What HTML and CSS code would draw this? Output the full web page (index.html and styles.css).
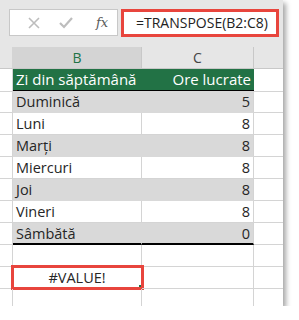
FILE: index.html
```html
<!DOCTYPE html>
<html>
<head>
<meta charset="utf-8">
<link rel="stylesheet" href="styles.css">
</head>
<body>
<div class="panel">
  <div class="fbar">
    <div class="fbox">
      <svg class="ico" width="14" height="14" viewBox="0 0 14 14"><path d="M2 2L12 12M12 2L2 12" stroke="#bdbdbd" stroke-width="1.6" fill="none"/></svg>
      <svg class="ico" width="16" height="14" viewBox="0 0 16 14"><path d="M2 7L6 11L14 2" stroke="#bdbdbd" stroke-width="2.2" fill="none"/></svg>
      <span class="fx">fx</span>
    </div>
    <div class="formula">=TRANSPOSE(B2:C8)</div>
  </div>
  <div class="sheet">
    <div class="c hd corner"></div>
    <div class="c hd sel">B</div>
    <div class="c hd">C</div>
    <div class="c hd last"></div>

    <div class="c rh"></div>
    <div class="c green">Zi din săptămână</div>
    <div class="c green num">Ore lucrate</div>
    <div class="c last top"></div>

    <div class="c rh"></div><div class="c g">Duminică</div><div class="c g num">5</div><div class="c last"></div>
    <div class="c rh"></div><div class="c">Luni</div><div class="c num">8</div><div class="c last"></div>
    <div class="c rh"></div><div class="c g">Marți</div><div class="c g num">8</div><div class="c last"></div>
    <div class="c rh"></div><div class="c">Miercuri</div><div class="c num">8</div><div class="c last"></div>
    <div class="c rh"></div><div class="c g">Joi</div><div class="c g num">8</div><div class="c last"></div>
    <div class="c rh"></div><div class="c">Vineri</div><div class="c num">8</div><div class="c last"></div>
    <div class="c rh"></div><div class="c g endrow">Sâmbătă</div><div class="c g num endrow">0</div><div class="c last"></div>

    <div class="c rh"></div><div class="c"></div><div class="c"></div><div class="c last"></div>
    <div class="c rh"></div><div class="c active">#VALUE!<span class="handle"></span></div><div class="c"></div><div class="c last"></div>
    <div class="c rh short"></div><div class="c short"></div><div class="c short"></div><div class="c last short"></div>
  </div>
</div>
</body>
</html>
```
FILE: styles.css
```css
html, body {
  margin: 0;
  padding: 0;
  background: #ffffff;
}
body {
  font-family: "Segoe UI", "Open Sans", "Noto Sans", sans-serif;
}
.panel {
  width: 283px;
  height: 306px;
  background: #ffffff;
  box-shadow: 3px 3px 5px rgba(0, 0, 0, 0.35);
  overflow: hidden;
}
.fbar {
  background: #e6e6e6;
  height: 47px;
  display: flex;
  align-items: flex-start;
  padding-top: 9px;
  padding-left: 9px;
  box-sizing: border-box;
}
.fbox {
  width: 109px;
  height: 27px;
  background: #ffffff;
  border: 1px solid #c8c8c8;
  box-sizing: border-box;
  display: flex;
  align-items: center;
  padding-left: 17px;
  gap: 17px;
}
.fx {
  font-family: "DejaVu Serif", "Liberation Serif", serif;
  font-style: italic;
  font-size: 13px;
  color: #5a5a5a;
  margin-left: 5px;
}
.formula {
  margin-left: 3px;
  width: 158px;
  height: 28px;
  border: 3px solid #e8453d;
  background: #ffffff;
  box-sizing: border-box;
  font-size: 14px;
  color: #222;
  line-height: 21px;
  padding-left: 12px;
  white-space: nowrap;
}
.sheet {
  display: grid;
  grid-template-columns: 13px 129px 112px 29px;
  grid-auto-rows: 22px;
  background: #ffffff;
}
.c {
  box-sizing: border-box;
  border-right: 1px solid #d4d4d4;
  border-bottom: 1px solid #d4d4d4;
  font-size: 14.5px;
  color: #262626;
  line-height: 21px;
  padding-left: 3px;
  padding-right: 3px;
  white-space: nowrap;
  position: relative;
}
.hd {
  background: #e6e6e6;
  border-bottom: 1px solid #c8c8c8;
  border-right: 1px solid #c8c8c8;
  text-align: center;
  color: #444;
  font-size: 14px;
  padding: 0;
}
.hd.corner {
  border-right: 1px solid #d4d4d4;
}
.hd.sel {
  background: #d4d4d4;
  color: #217346;
}
.last {
  border-right: none;
}
.hd.last {
  border-right: none;
}
.rh {
  padding: 0;
}
.green {
  background: #227245;
  color: #ffffff;
  border-right: none;
  border-bottom: 2px solid #000000;
  height: 23px;
  font-size: 15px;
}
.sheet > .c:nth-child(5), .sheet > .c:nth-child(8) {
  height: 23px;
}
.num {
  text-align: right;
}
.g {
  background: #d9d9d9;
  border-right-color: #d9d9d9;
  border-bottom-color: #d9d9d9;
}
.g.num {
  border-right-color: #d4d4d4;
}
.endrow {
  border-bottom: 2px solid #000000;
}
.active {
  text-align: center;
}
.active::after {
  content: "";
  position: absolute;
  left: -2px;
  top: -2px;
  right: -3px;
  bottom: -2px;
  border: 3px solid #e8453d;
}
.handle {
  position: absolute;
  right: 0px;
  bottom: 1px;
  width: 2px;
  height: 2px;
  background: #217346;
  z-index: 2;
}
.short {
  border-bottom: none;
}
```
